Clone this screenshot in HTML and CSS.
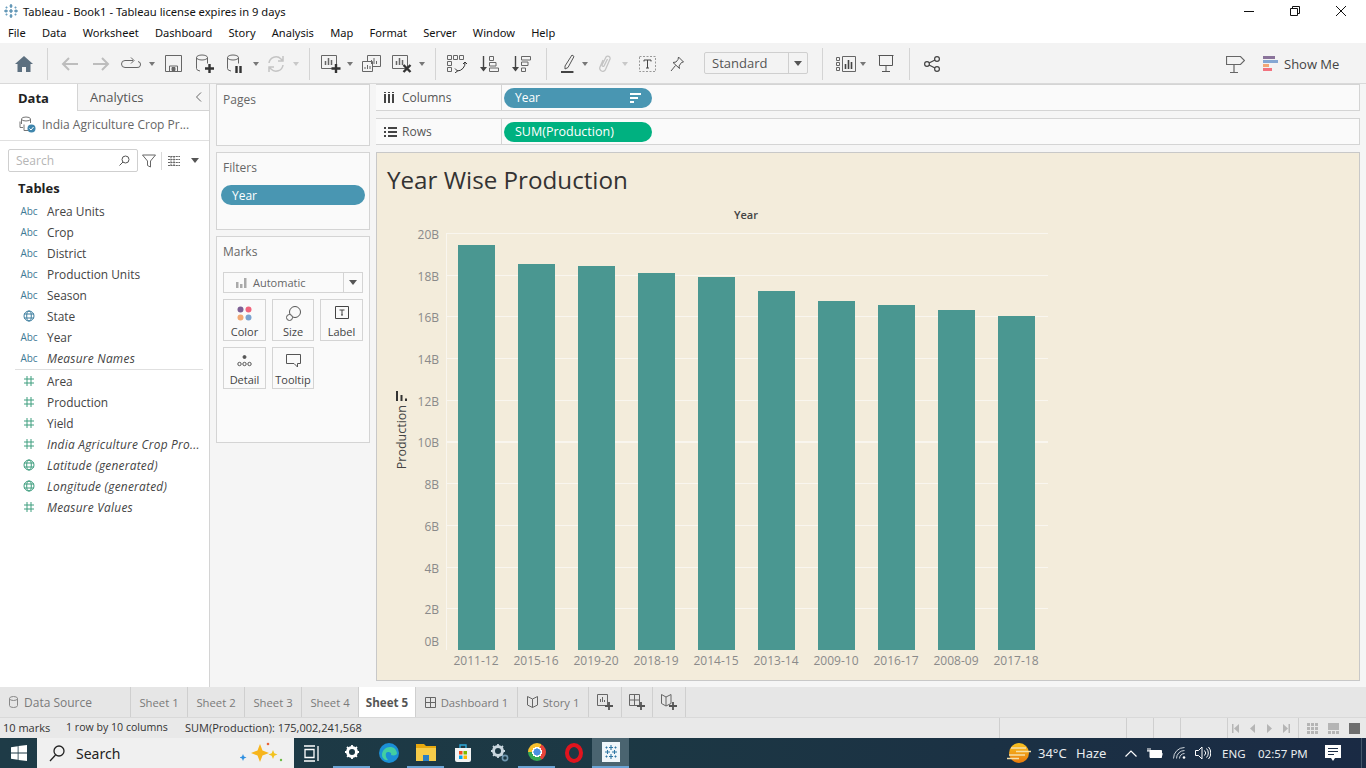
FILE: index.html
```html
<!DOCTYPE html>
<html lang="en">

<head>
    <meta charset="UTF-8">
    <meta name="viewport" content="width=device-width, initial-scale=1.0">
    <title>Tableau - Book1</title>
    <link rel="stylesheet" href="styles.css">
</head>

<body>
    <!-- Window title -->
    <div class="titlebar">
        <svg class="app-logo" width="16" height="16" viewBox="0 0 16 16" fill="none" stroke="#3f7fa6" stroke-width="1.2">
            <path d="M8 1v4M6.500 3h3M8 11v4M6.500 13h3M1 8h4M3 6.500v3M11 8h4M13 6.500v3M8 6v4M6 8h4" />
            <path d="M3.500 3.500v2M2.500 4.500h2M12.500 3.500v2M11.500 4.500h2M3.500 10.500v2M2.500 11.500h2M12.500 10.500v2M11.500 11.500h2" stroke="#6a9fc0" />
        </svg>
        <span class="title-text">Tableau - Book1 - Tableau license expires in 9 days</span>
        <div class="win-btns">
            <svg width="12" height="12" viewBox="0 0 12 12" fill="none" stroke="#111"><path d="M1 6.500h10" /></svg>
            <svg width="12" height="12" viewBox="0 0 12 12" fill="none" stroke="#111"><path d="M1.500 3.500h7v7h-7zM3.500 3.500v-2h7v7h-2" /></svg>
            <svg width="12" height="12" viewBox="0 0 12 12" fill="none" stroke="#111"><path d="M1 1l10 10M11 1L1 11" /></svg>
        </div>
    </div>

    <div class="menubar">
        <span>File</span><span>Data</span><span>Worksheet</span><span>Dashboard</span><span>Story</span><span>Analysis</span><span>Map</span><span>Format</span><span>Server</span><span>Window</span><span>Help</span>
    </div>

    <!-- Toolbar: every icon has its own track in the grid -->
    <div class="toolbar">
        <svg width="18" height="16" viewBox="0 0 18 16" fill="#5c6f7f"><path d="M9 0L0 8h2.500v8h4.500v-5h4v5h4.500V8H18z" /></svg>
        <i class="sep"></i>
        <svg width="18" height="16" viewBox="0 0 18 16" fill="none" stroke="#bdbdbd" stroke-width="2"><path d="M17 8H2M8 2L2 8l6 6" /></svg>
        <svg width="18" height="16" viewBox="0 0 18 16" fill="none" stroke="#bdbdbd" stroke-width="2"><path d="M1 8h15M10 2l6 6-6 6" /></svg>
        <svg width="20" height="14" viewBox="0 0 20 14" fill="none" stroke="#666"><path d="M12 3.500H4a3 3 0 0 0 0 7h12a3 3 0 0 0 1-6" /><path d="M10 .5l3 3-3 3" /></svg>
        <i class="caret"></i>
        <svg width="17" height="17" viewBox="0 0 17 17" fill="none" stroke="#666"><path d="M.5.5h16v16H.5z" /><path d="M4.500 16v-5h8v5" /><path d="M7 12.500h3v3H7z" fill="#666" /></svg>
        <svg width="20" height="20" viewBox="0 0 20 20" fill="none" stroke="#666"><ellipse cx="7" cy="3.500" rx="5.500" ry="2.500" /><path d="M1.500 3.500v11q0 2 3.500 2.500M12.500 3.500v6" /><path d="M14.500 10v9M10 14.500h9" stroke="#333" stroke-width="2.400" /></svg>
        <svg width="20" height="20" viewBox="0 0 20 20" fill="none" stroke="#666"><ellipse cx="7" cy="3.500" rx="5.500" ry="2.500" /><path d="M1.500 3.500v11q0 2 3.500 2.500M12.500 3.500v6" /><path d="M10.500 12v7M14.500 12v7" stroke="#333" stroke-width="2.400" /></svg>
        <i class="caret"></i>
        <svg width="18" height="18" viewBox="0 0 18 18" fill="none" stroke="#c4c4c4" stroke-width="1.500"><path d="M2 8a7 7 0 0 1 12-4l2 2M16 10a7 7 0 0 1-12 4l-2-2M16 1v5h-5M2 17v-5h5" /></svg>
        <i class="caret pale"></i>
        <i class="sep"></i>
        <svg width="20" height="20" viewBox="0 0 20 20" fill="none" stroke="#666"><path d="M.5 1.500h15v13H.5z" /><path d="M4.500 11V7M7.500 11V4M10.500 11V6" stroke-width="1.500" /><path d="M15 10v9M10.500 14.500h9" stroke="#333" stroke-width="2.400" /></svg>
        <i class="caret"></i>
        <svg width="19" height="17" viewBox="0 0 19 17" fill="none" stroke="#666"><path d="M5.500.5h13v11h-13z" fill="#f3f3f3" /><path d="M.5 6.500h10v10H.5z" fill="#f3f3f3" /><path d="M9.500 9V5M12 9V3M14.500 9V6M3 14v-2M5.500 14v-4M8 14v-3" /></svg>
        <svg width="20" height="20" viewBox="0 0 20 20" fill="none" stroke="#666"><path d="M.5 1.500h15v13H.5z" /><path d="M4.500 11V7M7.500 11V4M10.500 11V6" stroke-width="1.500" /><path d="M11.500 11l7 7M18.500 11l-7 7" stroke="#333" stroke-width="2.400" /></svg>
        <i class="caret"></i>
        <i class="sep"></i>
        <svg width="20" height="18" viewBox="0 0 20 18" fill="none" stroke="#666"><path d="M.5.5h4v4h-4zM6.500.5h4v4h-4zM12.500.5h4v4h-4zM.5 6.500h4v4h-4zM.5 12.500h4v4h-4z" /><path d="M18 7a8 8 0 0 1-8 9M8 13.500l2.500 2.500-2.500 2M16 9l2-2 2 2" stroke="#333" /></svg>
        <svg width="19" height="18" viewBox="0 0 19 18" fill="none" stroke="#666"><path d="M3.500 1v14" stroke="#444" stroke-width="1.400" /><path d="M0 12l3.500 4.500L7 12z" fill="#444" stroke="none" /><path d="M9.500 1.500h4v4h-4zM9.500 7.500h6.500v3.500H9.500zM9.500 13h9v3.500h-9z" /></svg>
        <svg width="19" height="18" viewBox="0 0 19 18" fill="none" stroke="#666"><path d="M3.500 1v14" stroke="#444" stroke-width="1.400" /><path d="M0 12l3.500 4.500L7 12z" fill="#444" stroke="none" /><path d="M9.500 1.500h9V5h-9zM9.500 7h6.500v3.500H9.500zM9.500 13h4v3.500h-4z" /></svg>
        <i class="sep"></i>
        <svg width="14" height="19" viewBox="0 0 14 19" fill="none" stroke="#555"><path d="M4 12l7-11 2 1.500-6 11-3 1.500zM0 18h13" /><path d="M0 18h12" stroke="#444" stroke-width="2" /></svg>
        <i class="caret"></i>
        <svg width="13" height="19" viewBox="0 0 13 19" fill="none" stroke="#c4c4c4" stroke-width="1.300"><path d="M4 6l-3 7a3 3 0 0 0 5.500 2.500L11 5a2.300 2.300 0 0 0-4-2L3 11a1.200 1.200 0 0 0 2 1l3.500-7" /></svg>
        <i class="caret pale"></i>
        <svg width="17" height="16" viewBox="0 0 17 16" fill="none" stroke="#999"><path d="M.5.5h16v15H.5z" stroke-dasharray="2 1.500" /><path d="M5 4h7M8.500 4v8M7 12h3M5 4v1.500M12 4v1.500" stroke="#444" /></svg>
        <svg width="14" height="16" viewBox="0 0 14 16" fill="none" stroke="#555"><path d="M8.500 1l5 5-2 .5L9 10l.5 2.500-6.500-6 3-.5 2-2.500zM5.500 9.500L1 15" /></svg>
        <i></i>
        <div class="standard"><span>Standard</span><b><i class="caret dark"></i></b></div>
        <i class="sep"></i>
        <svg width="20" height="16" viewBox="0 0 20 16" fill="none" stroke="#666"><path d="M.5 1.500h3v3h-3zM.5 6.500h3v3h-3zM.5 11.500h3v3h-3zM6.500.5h13v15h-13z" /><path d="M9.500 13V8M12.500 13V4M15.500 13V6" stroke="#444" stroke-width="1.600" /></svg>
        <i class="caret"></i>
        <svg width="16" height="17" viewBox="0 0 16 17" fill="none" stroke="#555"><path d="M.5.500h15M1.500.5v10h13V.5M8 10.500v6M4 16.500h8" /></svg>
        <i class="sep"></i>
        <svg width="16" height="16" viewBox="0 0 16 16" fill="none" stroke="#444" stroke-width="1.200"><circle cx="3" cy="8" r="2.400" /><circle cx="13" cy="3" r="2.400" /><circle cx="13" cy="13" r="2.400" /><path d="M5 7l6-3M5 9l6 3" /></svg>
        <i></i>
        <svg width="19" height="18" viewBox="0 0 19 18" fill="none" stroke="#666" stroke-width="1.200"><path d="M.5 1.500h14l4 4-4 4H.5zM8 9.500V17M4 17.500h8" /></svg>
        <div class="show-me">
            <svg width="15" height="15" viewBox="0 0 15 15"><path d="M0 0h12v3H0z" fill="#8a739a" /><path d="M0 4h15v3H0z" fill="#85a7d3" /><path d="M0 8h6v3H0z" fill="#f2a776" /><path d="M0 12h9v3H0z" fill="#f2737f" /></svg>
            <span>Show Me</span>
        </div>
    </div>

    <main class="workspace">
        <!-- Data pane -->
        <section class="data-pane">
            <div class="pane-tabs">
                <div class="pane-tab active">Data</div>
                <div class="pane-tab">Analytics
                    <svg class="collapse" width="7" height="10" viewBox="0 0 7 10" fill="none" stroke="#666"><path d="M6 .5L1.500 5 6 9.500" /></svg>
                </div>
            </div>
            <div class="source-row">
                <svg width="17" height="17" viewBox="0 0 17 17" fill="none" stroke="#777"><ellipse cx="7" cy="3" rx="4.500" ry="2" /><path d="M2.500 3v5M11.500 3v4M1 5.500v6h3M5 8.500v6h4" /><circle cx="12.500" cy="12.500" r="4" fill="#3f86ad" stroke="none" /><path d="M10.500 12.500l1.500 1.500 2.500-3" stroke="#fff" /></svg>
                <span>India Agriculture Crop Pr...</span>
            </div>
            <div class="search-row">
                <div class="search-box">
                    <span>Search</span>
                    <svg width="11" height="11" viewBox="0 0 11 11" fill="none" stroke="#555"><circle cx="6.500" cy="4.500" r="3.500" /><path d="M4 7l-3.500 3.500" /></svg>
                </div>
                <svg class="funnel" width="14" height="14" viewBox="0 0 14 14" fill="none" stroke="#666"><path d="M.5 1h13L8.500 7v6l-3-1.500V7z" /></svg>
                <i class="vline"></i>
                <svg class="list-ic" width="12" height="10" viewBox="0 0 12 10" fill="none" stroke="#666"><path d="M0 .5h12M0 3.500h12M0 6.500h12M0 9.500h12M3 0v10M6 0v10" stroke-dasharray="2 .6" /></svg>
                <i class="caret dark"></i>
            </div>
            <h2 class="tables-head">Tables</h2>
            <ul class="fields">
                <li><span class="abc">Abc</span>Area Units</li>
                <li><span class="abc">Abc</span>Crop</li>
                <li><span class="abc">Abc</span>District</li>
                <li><span class="abc">Abc</span>Production Units</li>
                <li><span class="abc">Abc</span>Season</li>
                <li><span class="ftype blue"><svg width="12" height="12" viewBox="0 0 12 12" fill="none" stroke="currentColor"><circle cx="6" cy="6" r="5" /><ellipse cx="6" cy="6" rx="2.300" ry="5" /><path d="M1 4h10M1 8h10" /></svg></span>State</li>
                <li><span class="abc">Abc</span>Year</li>
                <li class="calc"><span class="abc">Abc</span>Measure Names</li>
            </ul>
            <ul class="fields measures">
                <li><span class="ftype green"><svg width="10" height="10" viewBox="0 0 10 10" fill="none" stroke="currentColor"><path d="M3 0v10M7 0v10M0 3h10M0 7h10" /></svg></span>Area</li>
                <li><span class="ftype green"><svg width="10" height="10" viewBox="0 0 10 10" fill="none" stroke="currentColor"><path d="M3 0v10M7 0v10M0 3h10M0 7h10" /></svg></span>Production</li>
                <li><span class="ftype green"><svg width="10" height="10" viewBox="0 0 10 10" fill="none" stroke="currentColor"><path d="M3 0v10M7 0v10M0 3h10M0 7h10" /></svg></span>Yield</li>
                <li class="calc"><span class="ftype green"><svg width="10" height="10" viewBox="0 0 10 10" fill="none" stroke="currentColor"><path d="M3 0v10M7 0v10M0 3h10M0 7h10" /></svg></span>India Agriculture Crop Pro...</li>
                <li class="calc"><span class="ftype green"><svg width="12" height="12" viewBox="0 0 12 12" fill="none" stroke="currentColor"><circle cx="6" cy="6" r="5" /><ellipse cx="6" cy="6" rx="2.300" ry="5" /><path d="M1 4h10M1 8h10" /></svg></span>Latitude (generated)</li>
                <li class="calc"><span class="ftype green"><svg width="12" height="12" viewBox="0 0 12 12" fill="none" stroke="currentColor"><circle cx="6" cy="6" r="5" /><ellipse cx="6" cy="6" rx="2.300" ry="5" /><path d="M1 4h10M1 8h10" /></svg></span>Longitude (generated)</li>
                <li class="calc"><span class="ftype green"><svg width="10" height="10" viewBox="0 0 10 10" fill="none" stroke="currentColor"><path d="M3 0v10M7 0v10M0 3h10M0 7h10" /></svg></span>Measure Values</li>
            </ul>
        </section>

        <!-- Pages, filters and marks -->
        <section class="cards">
            <div class="card pages-card"><h3>Pages</h3></div>
            <div class="card filters-card">
                <h3>Filters</h3>
                <div class="pill blue-pill filter-pill">Year</div>
            </div>
            <div class="card marks-card">
                <h3>Marks</h3>
                <div class="mark-select">
                    <svg width="11" height="10" viewBox="0 0 11 10" fill="#aaa"><path d="M0 4h2.500v6H0zM4 6h2.500v4H4zM8 0h2.500v10H8z" /></svg>
                    <span>Automatic</span>
                    <b><i class="caret dark"></i></b>
                </div>
                <div class="mark-grid">
                    <div class="mark-btn">
                        <svg width="15" height="15" viewBox="0 0 15 15"><circle cx="3.500" cy="3.500" r="3" fill="#7d5f94" /><circle cx="11.500" cy="3.500" r="3" fill="#f0647c" /><circle cx="3.500" cy="11.500" r="3" fill="#f2a873" /><circle cx="11.500" cy="11.500" r="3" fill="#7ba3d0" /></svg>
                        <span>Color</span>
                    </div>
                    <div class="mark-btn">
                        <svg width="15" height="15" viewBox="0 0 15 15" fill="none" stroke="#555"><circle cx="9" cy="6" r="5.500" /><circle cx="3.500" cy="11.500" r="3" fill="#fafafa" /></svg>
                        <span>Size</span>
                    </div>
                    <div class="mark-btn">
                        <svg width="14" height="13" viewBox="0 0 14 13" fill="none" stroke="#444"><path d="M.5.500h13v12H.5z" /><path d="M4.500 4h5M7 4v5M6 9h2" /></svg>
                        <span>Label</span>
                    </div>
                    <div class="mark-btn">
                        <svg width="15" height="14" viewBox="0 0 15 14" fill="none" stroke="#555"><circle cx="7.500" cy="3" r="1.500" fill="#555" /><circle cx="2.500" cy="10" r="1.700" /><circle cx="7.500" cy="10" r="1.700" /><circle cx="12.500" cy="10" r="1.700" /></svg>
                        <span>Detail</span>
                    </div>
                    <div class="mark-btn">
                        <svg width="15" height="14" viewBox="0 0 15 14" fill="none" stroke="#555"><path d="M.5.500h14v9h-3v3.500l-3.500-3.500H.5z" /></svg>
                        <span>Tooltip</span>
                    </div>
                </div>
            </div>
        </section>

        <!-- Shelves and the view -->
        <section class="view-col">
            <div class="shelf">
                <div class="shelf-label">
                    <svg class="col-ic" width="10" height="11" viewBox="0 0 10 11" fill="#444"><path d="M0 2h2v9H0zM4 2h2v9H4zM8 2h2v9H8zM0 0h2v1H0zM4 0h2v1H4zM8 0h2v1H8z" /></svg>
                    <span>Columns</span>
                </div>
                <div class="shelf-body">
                    <div class="pill blue-pill shelf-pill">Year
                        <svg width="11" height="10" viewBox="0 0 11 10" fill="#fff"><path d="M0 0h11v2H0zM0 4h8v2H0zM0 8h4v2H0z" /></svg>
                    </div>
                </div>
            </div>
            <div class="shelf">
                <div class="shelf-label">
                    <svg width="13" height="10" viewBox="0 0 13 10" fill="#444"><path d="M0 0h2v2H0zM4 0h9v2H4zM0 4h2v2H0zM4 4h9v2H4zM0 8h2v2H0zM4 8h9v2H4z" /></svg>
                    <span>Rows</span>
                </div>
                <div class="shelf-body">
                    <div class="pill green-pill shelf-pill">SUM(Production)</div>
                </div>
            </div>

            <div class="viz">
                <h1 class="viz-title">Year Wise Production</h1>
                <div class="col-head">Year</div>
                <div class="chart">
                    <div class="axis-title">
                        <span>Production</span>
                        <svg width="11" height="10" viewBox="0 0 11 10" fill="#333"><path d="M0 0h2v10H0zM4.500 4h2v6h-2zM9 7.500h2V10H9z" /></svg>
                    </div>
                    <div class="ticks">
                        <span>20B</span><span>18B</span><span>16B</span><span>14B</span><span>12B</span><span>10B</span><span>8B</span><span>6B</span><span>4B</span><span>2B</span><span class="zero">0B</span>
                    </div>
                    <div class="plot-wrap">
                        <div class="plot">
                            <div class="bar" style="height:405px"></div>
                            <div class="bar" style="height:386px"></div>
                            <div class="bar" style="height:384px"></div>
                            <div class="bar" style="height:377px"></div>
                            <div class="bar" style="height:373px"></div>
                            <div class="bar" style="height:359px"></div>
                            <div class="bar" style="height:349px"></div>
                            <div class="bar" style="height:345px"></div>
                            <div class="bar" style="height:340px"></div>
                            <div class="bar" style="height:334px"></div>
                        </div>
                        <div class="x-labels">
                            <span>2011-12</span><span>2015-16</span><span>2019-20</span><span>2018-19</span><span>2014-15</span><span>2013-14</span><span>2009-10</span><span>2016-17</span><span>2008-09</span><span>2017-18</span>
                        </div>
                    </div>
                </div>
            </div>
        </section>
    </main>

    <!-- Sheet tabs -->
    <nav class="sheet-tabs">
        <div class="tab ds-tab">
            <svg width="9" height="12" viewBox="0 0 9 12" fill="none" stroke="#888"><ellipse cx="4.500" cy="2.500" rx="4" ry="2" /><path d="M.5 2.500v7q0 2 4 2t4-2v-7" /></svg>
            Data Source
        </div>
        <div class="tab sheet">Sheet 1</div>
        <div class="tab sheet">Sheet 2</div>
        <div class="tab sheet">Sheet 3</div>
        <div class="tab sheet">Sheet 4</div>
        <div class="tab sheet active">Sheet 5</div>
        <div class="tab dash-tab">
            <svg width="11" height="11" viewBox="0 0 11 11" fill="none" stroke="#666"><path d="M.5.500h10v10H.5zM.5 5.500h10M5.500.5v10" /></svg>
            Dashboard 1
        </div>
        <div class="tab story-tab">
            <svg width="11" height="12" viewBox="0 0 11 12" fill="none" stroke="#666"><path d="M5.500 3L.5.500v8.500l5 2.500 5-2.500V.5zM5.500 3v8.500" /></svg>
            Story 1
        </div>
        <div class="tab add-tab">
            <svg width="16" height="16" viewBox="0 0 16 16" fill="none" stroke="#666"><path d="M.5.5h10v11H.5zM3.500 8V5M5.500 8V3M7.500 8V6" /><path d="M12 8v8M8 12h8" stroke="#555" stroke-width="1.800" /></svg>
        </div>
        <div class="tab add-tab narrow">
            <svg width="16" height="16" viewBox="0 0 16 16" fill="none" stroke="#666"><path d="M.5.5h10v11H.5zM.5 6h10M5.500.5v11" /><path d="M12 8v8M8 12h8" stroke="#555" stroke-width="1.800" /></svg>
        </div>
        <div class="tab add-tab">
            <svg width="16" height="16" viewBox="0 0 16 16" fill="none" stroke="#666"><path d="M5 3L.5.500v9L5 12l5-2.500v-9zM5 3v9" /><path d="M12 8v8M8 12h8" stroke="#555" stroke-width="1.800" /></svg>
        </div>
    </nav>

    <!-- Status bar -->
    <footer class="statusbar">
        <span class="st-marks">10 marks</span>
        <span class="st-dims">1 row by 10 columns</span>
        <span class="st-sum">SUM(Production): 175,002,241,568</span>
        <i class="st-cell c1"></i><i class="st-cell c2"></i><i class="st-cell c3"></i><i class="st-cell c4"></i>
        <div class="st-cell pager">
            <svg width="62" height="9" viewBox="0 0 62 9" fill="#b5b5b5"><path d="M0 0h1.500v9H0zM7 0v9L2 4.500zM23 0v9l-5-4.500zM35 0v9l5-4.500zM51 0v9l5-4.500zM56.500 0H58v9h-1.500z" /></svg>
        </div>
        <div class="st-cell views">
            <svg width="11" height="11" viewBox="0 0 11 11" fill="#b5b5b5"><path d="M0 0h3v3H0zM4 0h3v3H4zM8 0h3v3H8zM0 4h3v3H0zM4 4h3v3H4zM8 4h3v3H8zM0 8h3v3H0zM4 8h3v3H4zM8 8h3v3H8z" /></svg>
            <svg width="11" height="11" viewBox="0 0 11 11" fill="#b5b5b5"><path d="M0 0h11v7H0zM0 8h3v3H0zM4 8h3v3H4zM8 8h3v3H8z" /></svg>
            <svg width="11" height="11" viewBox="0 0 11 11" fill="#6e6e6e"><path d="M0 0h11v11H0z" /></svg>
        </div>
    </footer>

    <!-- Windows taskbar -->
    <div class="taskbar">
        <div class="start">
            <svg width="16" height="16" viewBox="0 0 16 16" fill="#fff"><path d="M0 2.200l6.700-1v6.400H0zM7.500 1l8.500-1v7.600H7.500zM0 8.400h6.700v6.400l-6.700-1zM7.500 8.400H16V16l-8.500-1.100z" /></svg>
        </div>
        <div class="task-search">
            <svg width="16" height="17" viewBox="0 0 16 17" fill="none" stroke="#222" stroke-width="1.300"><circle cx="10" cy="6" r="5" /><path d="M6.500 10L1 16" /></svg>
            <span>Search</span>
            <svg class="sparkle" width="46" height="24" viewBox="0 0 46 24"><path d="M20 3l2.500 6.500L29 12l-6.500 2.500L20 21l-2.500-6.500L11 12l6.500-2.500z" fill="#f7b51c" /><path d="M33 9l1.300 3.200 3.200 1.300-3.200 1.300L33 18l-1.300-3.200-3.200-1.300 3.200-1.300z" fill="#f2c21e" /><path d="M3 13l1 2.500L6.500 16.500 4 17.500 3 20l-1-2.500-2.500-1L2 15.500z" fill="#2f8fe0" /><circle cx="28" cy="3" r="1.300" fill="#e8643a" /><circle cx="41" cy="19" r="1.200" fill="#6dbb45" /></svg>
        </div>
        <div class="apps">
            <div class="app">
                <svg width="16" height="17" viewBox="0 0 16 17" fill="none" stroke="#fff" stroke-width="1.300"><path d="M0 1h11M0 16h11M1 4.500h9v8H1zM14 1v15" /></svg>
            </div>
            <div class="app running">
                <svg width="14" height="14" viewBox="0 0 14 14"><circle cx="7" cy="7" r="4.500" fill="none" stroke="#fff" stroke-width="3" /><path d="M7 0v14M0 7h14M2 2l10 10M12 2L2 12" stroke="#fff" stroke-width="1.800" stroke-dasharray="2.200 9.600" /></svg>
            </div>
            <div class="app">
                <svg width="20" height="20" viewBox="0 0 20 20"><circle cx="10" cy="10" r="10" fill="#1b8fd6" /><path d="M3 12c0-5 4-8 8-8s6 2 7 6c.3 2-3 3-6 2 1-2-1-3-3-3-3 0-3 5 0 8-3 1-6-2-6-5z" fill="#43cfa0" /></svg>
            </div>
            <div class="app running">
                <svg width="20" height="18" viewBox="0 0 20 18"><path d="M0 1h8l2 2h10v4H0z" fill="#e8a90f" /><path d="M0 5h20v13H0z" fill="#f6cc4a" /><path d="M7 18v-6h6v6z" fill="#2a7fc5" /></svg>
            </div>
            <div class="app">
                <svg width="16" height="18" viewBox="0 0 16 18"><path d="M0 4h16v12a2 2 0 0 1-2 2H2a2 2 0 0 1-2-2z" fill="#f3f3f3" /><path d="M5 4V1h6v3" fill="none" stroke="#2ea8d8" stroke-width="1.400" /><path d="M4 7h3.500v3.500H4z" fill="#f25022" /><path d="M8.500 7H12v3.500H8.500z" fill="#7fba00" /><path d="M4 11.500h3.500V15H4z" fill="#00a4ef" /><path d="M8.500 11.500H12V15H8.500z" fill="#ffb900" /></svg>
            </div>
            <div class="app">
                <svg width="18" height="18" viewBox="0 0 18 18"><circle cx="7" cy="7" r="4.500" fill="none" stroke="#c9d6de" stroke-width="3" /><path d="M7 0v14M0 7h14M2 2l10 10M12 2L2 12" stroke="#c9d6de" stroke-width="1.800" stroke-dasharray="2.200 9.600" /><circle cx="14" cy="14" r="2.600" fill="none" stroke="#6e95ad" stroke-width="1.600" /></svg>
            </div>
            <div class="app running">
                <div class="chrome-ic"></div>
            </div>
            <div class="app">
                <svg width="18" height="20" viewBox="0 0 18 20"><ellipse cx="9" cy="10" rx="7" ry="8" fill="none" stroke="#e0141e" stroke-width="4" /></svg>
            </div>
            <div class="app running current">
                <svg width="18" height="20" viewBox="0 0 18 20"><path d="M0 0h18v20H0z" fill="#f0f6fa" /><path d="M9 3v5M7 5.500h4M9 12v5M7 14.500h4M3 10h5M5.500 8v4M10 10h5M12.500 8v4M4.500 4.500v2M3.500 5.500h2M13.500 4.500v2M12.500 5.500h2M4.500 13.500v2M3.500 14.500h2M13.500 13.500v2M12.500 14.500h2" stroke="#2f76a3" stroke-width="1.100" fill="none" /></svg>
            </div>
        </div>
        <div class="tray">
            <svg class="sun" width="24" height="22" viewBox="0 0 24 22"><defs><linearGradient id="sunGrad" x1="0" y1="0" x2="0" y2="1"><stop offset="0" stop-color="#f9c320" /><stop offset="1" stop-color="#e8790c" /></linearGradient></defs><circle cx="12" cy="11" r="10" fill="url(#sunGrad)" /><path d="M4 6h15M9 9.500h15M2 13h16M0 16.500h12" stroke="#f5dfa8" stroke-width="1.300" /></svg>
            <span class="temp">34°C</span>
            <span class="haze">Haze</span>
            <svg class="chev" width="12" height="7" viewBox="0 0 12 7" fill="none" stroke="#fff" stroke-width="1.200"><path d="M.5 6.500L6 1l5.500 5.500" /></svg>
            <svg class="batt" width="16" height="11" viewBox="0 0 16 11" fill="none" stroke="#fff"><path d="M3 2.500h11.500v7H3z" fill="#fff" /><path d="M15 5v2.500M1 0v3M3 0v3M0 3h4" /></svg>
            <svg class="wifi" width="13" height="12" viewBox="0 0 13 12" fill="none" stroke="#cfd6dc"><path d="M.5 11.500a11 11 0 0 1 11-11M3.500 11.500a8 8 0 0 1 8-8M6.500 11.500a5 5 0 0 1 5-5" /><circle cx="11" cy="10.500" r="1.300" fill="#fff" stroke="none" /></svg>
            <svg class="vol" width="16" height="14" viewBox="0 0 16 14" fill="none" stroke="#fff"><path d="M.5 4.500h3L7 1v12L3.500 9.500h-3zM9.500 4.500a3.500 3.500 0 0 1 0 5M11.500 2.500a6.500 6.500 0 0 1 0 9M13.500 1a9 9 0 0 1 0 12" /></svg>
            <span class="eng">ENG</span>
            <span class="clock">02:57 PM</span>
            <svg class="notif" width="16" height="16" viewBox="0 0 16 16"><path d="M0 0h16v13h-6l-2 3-2-3H0z" fill="#fff" /><path d="M3 3.500h10M3 6.500h10M3 9.500h6" stroke="#1b2c45" /></svg>
            <i class="show-desktop"></i>
        </div>
    </div>
</body>

</html>
```

FILE: styles.css
```css
html,
body {
    margin: 0;
    height: 768px;
    overflow: hidden;
}

body {
    width: 1366px;
    display: flex;
    flex-direction: column;
    font-family: "Open Sans", "Noto Sans", sans-serif;
    font-size: 12px;
    color: #333;
    background-color: #fff;
}

ul,
h1,
h2,
h3 {
    margin: 0;
    padding: 0;
    font-weight: normal;
}

svg {
    display: block;
    flex-shrink: 0;
}

/* Title and menu */
.titlebar {
    height: 22px;
    display: flex;
    align-items: center;
    padding-left: 3px;
    font-size: 12px;
    color: #111;
}

.app-logo {
    margin-right: 4px;
}

.title-text {
    font-family: "Noto Sans", sans-serif;
    font-size: 11.2px;
}

.win-btns {
    margin-left: auto;
    display: flex;
    gap: 34px;
    padding-right: 19px;
}

.menubar {
    height: 21px;
    display: flex;
    align-items: center;
    gap: 16.2px;
    padding-left: 8px;
    font-family: "Noto Sans", sans-serif;
    font-size: 11.1px;
    color: #111;
}

/* Toolbar */
.toolbar {
    height: 41px;
    flex-shrink: 0;
    display: grid;
    grid-template-columns: 30px 16px 30px 32px 28px 14px 28px 36px 26px 14px 26px 14px 13px 29px 10px 32px 29px 12px 14px 30px 35px 28px 22px 22px 12px 28px 12px 32px 28px 13px 104px 28px 20px 14px 31px 16px 30px 1fr 19px 121px;
    align-items: center;
    justify-items: center;
    padding-left: 9px;
    padding-top: 1px;
    background-color: #f3f3f3;
    border-bottom: 1px solid #d9d9d9;
    box-sizing: border-box;
}

.sep {
    display: block;
    width: 1px;
    height: 32px;
    background-color: #d4d4d4;
}

.caret {
    display: block;
    width: 0;
    height: 0;
    border-left: 3.5px solid transparent;
    border-right: 3.5px solid transparent;
    border-top: 4px solid #777;
}

.caret.pale {
    border-top-color: #c8c8c8;
}

.caret.dark {
    border-left-width: 4px;
    border-right-width: 4px;
    border-top: 5px solid #555;
}

.standard {
    width: 104px;
    height: 22px;
    margin-top: -1px;
    box-sizing: border-box;
    display: flex;
    align-items: center;
    border: 1px solid #cfcfcf;
    border-radius: 2px;
    font-size: 13px;
    color: #555;
}

.standard span {
    flex: 1;
    padding-left: 7px;
}

.standard b {
    width: 18px;
    height: 100%;
    border-left: 1px solid #cfcfcf;
    display: flex;
    align-items: center;
    justify-content: center;
}

.show-me {
    justify-self: start;
    display: flex;
    align-items: center;
    gap: 6px;
    margin-left: 18px;
    font-size: 13px;
    color: #444;
}

/* Main area */
.workspace {
    height: 603px;
    flex-shrink: 0;
    display: flex;
    background-color: #f5f5f5;
}

.data-pane {
    width: 210px;
    box-sizing: border-box;
    background-color: #fff;
    border-right: 1px solid #d4d4d4;
}

.pane-tabs {
    height: 27px;
    display: flex;
}

.pane-tab {
    display: flex;
    align-items: center;
    font-size: 13px;
    color: #555;
}

.pane-tab.active {
    width: 77px;
    padding-left: 18px;
    box-sizing: border-box;
    font-weight: 700;
    color: #222;
}

.pane-tab:not(.active) {
    flex: 1;
    padding-left: 12px;
    background-color: #f5f5f5;
    border-left: 1px solid #d4d4d4;
    border-bottom: 1px solid #d4d4d4;
}

.collapse {
    margin-left: auto;
    margin-right: 7px;
}

.source-row {
    height: 30px;
    display: flex;
    align-items: center;
    gap: 6px;
    padding-left: 19px;
    padding-bottom: 2px;
    border-bottom: 1px solid #e0e0e0;
    box-sizing: border-box;
    font-size: 12px;
    color: #666;
}

.search-row {
    height: 36px;
    display: flex;
    align-items: center;
    padding-left: 8px;
    padding-top: 3px;
    box-sizing: border-box;
}

.search-box {
    width: 130px;
    height: 23px;
    box-sizing: border-box;
    display: flex;
    align-items: center;
    justify-content: space-between;
    padding: 0 7px;
    border: 1px solid #cfcfcf;
    border-radius: 2px;
    color: #b5b5b5;
}

.funnel {
    margin-left: 4px;
}

.vline {
    display: block;
    width: 1px;
    height: 18px;
    margin: 0 6px 0 5px;
    background-color: #d9d9d9;
}

.list-ic {
    margin-right: 11px;
}

.tables-head {
    height: 22px;
    line-height: 22px;
    padding-left: 18px;
    font-size: 13px;
    font-weight: 700;
    color: #222;
}

.fields {
    list-style: none;
    padding-top: 1px;
}

.fields li {
    height: 21px;
    display: flex;
    align-items: center;
    padding-left: 47px;
    position: relative;
    color: #444;
    font-size: 11.9px;
    white-space: nowrap;
}

.fields li.calc {
    font-style: italic;
    letter-spacing: 0.25px;
}

.abc,
.ftype {
    position: absolute;
    left: 19px;
    width: 20px;
    display: flex;
    justify-content: center;
}

.abc {
    font-size: 10px;
    font-style: normal;
    letter-spacing: 0;
    color: #3f7a96;
}

.ftype.blue {
    color: #3f7f9f;
}

.ftype.green {
    color: #3f9e7f;
}

.measures {
    margin: 1px 6px 0 15px;
    padding-top: 0;
    border-top: 1px solid #e0e0e0;
}

.measures li {
    margin-left: -15px;
}

/* Pages, filters, marks */
.cards {
    width: 166px;
    box-sizing: border-box;
    padding: 0 6px;
    display: flex;
    flex-direction: column;
    gap: 6px;
}

.card {
    box-sizing: border-box;
    padding: 6px 6px 0;
    background-color: #fafafa;
    border: 1px solid #d4d4d4;
}

.card h3 {
    font-size: 12px;
    padding-bottom: 9px;
    color: #666;
}

.pages-card {
    height: 62px;
}

.filters-card {
    height: 78px;
}

.marks-card {
    height: 207px;
}

.filter-pill {
    margin-left: -2px;
    width: 144px;
}

.pill {
    height: 20px;
    box-sizing: border-box;
    display: flex;
    align-items: center;
    justify-content: space-between;
    padding: 0 11px;
    border-radius: 10px;
    color: #fff;
    font-size: 12px;
}

.blue-pill {
    background-color: #4996b2;
}

.green-pill {
    background-color: #00b180;
    font-size: 12.5px;
}

.mark-select {
    height: 21px;
    margin-top: 3px;
    box-sizing: border-box;
    display: flex;
    align-items: center;
    gap: 6px;
    padding-left: 12px;
    border: 1px solid #d4d4d4;
    font-size: 11px;
    color: #666;
}

.mark-select b {
    margin-left: auto;
    width: 18px;
    height: 100%;
    border-left: 1px solid #d4d4d4;
    display: flex;
    align-items: center;
    justify-content: center;
}

.mark-grid {
    margin-top: 6px;
    display: grid;
    grid-template-columns: 43px 42px 43px;
    grid-auto-rows: 42px;
    column-gap: 6px;
    row-gap: 6px;
}

.mark-btn {
    box-sizing: border-box;
    display: flex;
    flex-direction: column;
    align-items: center;
    justify-content: space-between;
    padding: 6px 0 1px;
    border: 1px solid #d4d4d4;
    font-size: 11px;
    color: #444;
}

/* Shelves */
.view-col {
    width: 984px;
    display: flex;
    flex-direction: column;
}

.shelf {
    height: 27px;
    margin-bottom: 7px;
    display: flex;
    box-sizing: border-box;
    background-color: #fafafa;
    border-top: 1px solid #d4d4d4;
    border-bottom: 1px solid #d4d4d4;
    border-right: 1px solid #d4d4d4;
}

.shelf-label {
    width: 126px;
    box-sizing: border-box;
    display: flex;
    align-items: center;
    gap: 5px;
    padding-left: 8px;
    border-right: 1px solid #d4d4d4;
    color: #555;
}

.col-ic {
    margin-right: 3px;
}

.shelf-body {
    display: flex;
    align-items: center;
    padding-left: 2px;
}

.shelf-pill {
    width: 148px;
}

/* The view */
.viz {
    height: 529px;
    box-sizing: border-box;
    padding: 12px 0 0 10px;
    background-color: #f3ecdb;
    border: 1px solid #c8c8c8;
}

.viz-title {
    font-size: 24.2px;
    line-height: 30px;
    color: #333;
}

.col-head {
    width: 718px;
    margin-top: 12px;
    text-align: center;
    font-size: 11px;
    font-weight: 600;
    color: #444;
}

.chart {
    margin-top: 11px;
    display: flex;
}

.axis-title {
    width: 20px;
    margin-left: 4px;
    height: 417px;
    display: flex;
    flex-direction: column-reverse;
    align-items: center;
    justify-content: flex-start;
    padding-bottom: 181px;
    box-sizing: border-box;
    gap: 4px;
    font-size: 12.5px;
    color: #444;
}

.axis-title span {
    writing-mode: vertical-rl;
    transform: rotate(180deg);
}

.ticks {
    width: 28px;
    margin-top: -5px;
    display: flex;
    flex-direction: column;
    align-items: flex-end;
    font-size: 12px;
    color: #8a8a8a;
}

.ticks span {
    height: 41.7px;
    flex-shrink: 0;
    line-height: 14px;
}

.ticks .zero {
    height: 14px;
    margin-top: -10px;
}

.plot-wrap {
    width: 602px;
    margin-left: 7px;
}

.plot {
    height: 417px;
    box-sizing: border-box;
    display: flex;
    align-items: flex-end;
    gap: 23px;
    padding-left: 11px;
    border-left: 1px solid #f9f6ef;
    background-image: repeating-linear-gradient(to bottom, #f9f6ef 0, #f9f6ef 1px, transparent 1px, transparent 41.7px);
}

.bar {
    width: 37px;
    background-color: #4a9791;
}

.x-labels {
    display: flex;
    margin-top: 2px;
}

.x-labels span {
    width: 60px;
    text-align: center;
    font-size: 12px;
    color: #8a8a8a;
}

/* Sheet tabs */
.sheet-tabs {
    height: 30px;
    flex-shrink: 0;
    display: flex;
    background-color: #e6e6e6;
}

.tab {
    box-sizing: border-box;
    display: flex;
    align-items: center;
    justify-content: center;
    gap: 5px;
    border-right: 1px solid #cfcfcf;
    font-size: 11.3px;
    color: #7a7a7a;
}

.ds-tab {
    width: 131px;
    justify-content: flex-start;
    gap: 6px;
    padding-left: 9px;
    font-size: 12px;
}

.sheet {
    width: 57px;
}

.sheet.active {
    background-color: #fff;
    font-weight: 700;
    font-size: 11.6px;
    color: #555;
}

.dash-tab {
    width: 102px;
}

.story-tab {
    width: 71px;
}

.add-tab {
    width: 33px;
}

.add-tab.narrow {
    width: 31px;
}

/* Status bar */
.statusbar {
    height: 21px;
    flex-shrink: 0;
    display: flex;
    align-items: center;
    box-sizing: border-box;
    background-color: #e9e9e9;
    border-top: 1px solid #d9d9d9;
    font-size: 11px;
    color: #333;
}

.statusbar span {
    margin-top: -2px;
}

.st-marks {
    margin-left: 3px;
    width: 63px;
}

.st-dims {
    width: 119px;
    font-size: 10.6px;
}

.st-sum {
    width: 814px;
}

.st-cell {
    display: block;
    height: 100%;
    box-sizing: border-box;
    border-left: 1px solid #cfcfcf;
}

.c1 {
    width: 127px;
}

.c2,
.c3 {
    width: 27px;
}

.c4 {
    width: 47px;
}

.pager {
    width: 71px;
    display: flex;
    align-items: center;
    justify-content: center;
}

.views {
    flex: 1;
    display: flex;
    align-items: center;
    gap: 10px;
    padding-left: 8px;
}

/* Taskbar */
.taskbar {
    height: 30px;
    flex-shrink: 0;
    display: flex;
    align-items: center;
    background: linear-gradient(to right, #1e3b47, #1c3844 45%, #1a2a44);
    color: #fff;
    font-family: "Noto Sans", sans-serif;
}

.start {
    width: 37px;
    display: flex;
    justify-content: center;
}

.task-search {
    width: 257px;
    height: 30px;
    box-sizing: border-box;
    display: flex;
    align-items: center;
    gap: 11px;
    padding-left: 12px;
    background-color: #f0f0f0;
    color: #222;
    font-size: 14px;
}

.sparkle {
    margin-left: auto;
    margin-right: 8px;
}

.apps {
    display: flex;
    height: 100%;
}

.app {
    width: 37px;
    height: 100%;
    display: flex;
    align-items: center;
    justify-content: center;
    box-sizing: border-box;
}

.app:first-child {
    width: 36px;
    margin-right: 3px;
}

.app.running {
    border-bottom: 2px solid #6aa3d4;
}

.app.current {
    background-color: #4a6470;
}

.chrome-ic {
    width: 18px;
    height: 18px;
    box-sizing: border-box;
    border: 5px solid transparent;
    border-radius: 50%;
    background:
        radial-gradient(circle, #4a90e2 0 3.5px, #fff 3.6px 5px, transparent 5.1px) center / 18px 18px border-box,
        conic-gradient(from 30deg, #e8443a 0 120deg, #34a853 120deg 240deg, #f9c12e 240deg 360deg) border-box;
}

.tray {
    margin-left: auto;
    height: 100%;
    display: flex;
    align-items: center;
    font-size: 12.5px;
    color: #e8ecef;
}

.sun {
    margin-right: 7px;
}

.temp {
    width: 38px;
    font-size: 13px;
}

.haze {
    width: 49px;
    font-size: 13px;
}

.chev {
    margin-right: 10px;
}

.batt {
    margin-right: 10px;
}

.wifi {
    margin-right: 9px;
}

.vol {
    margin-right: 11px;
}

.eng {
    width: 36px;
    font-size: 11.5px;
}

.clock {
    width: 67px;
    font-size: 11.5px;
}

.notif {
    margin-right: 20px;
}

.show-desktop {
    display: block;
    width: 1px;
    height: 100%;
    background-color: #44566a;
    margin-right: 4px;
}
```
